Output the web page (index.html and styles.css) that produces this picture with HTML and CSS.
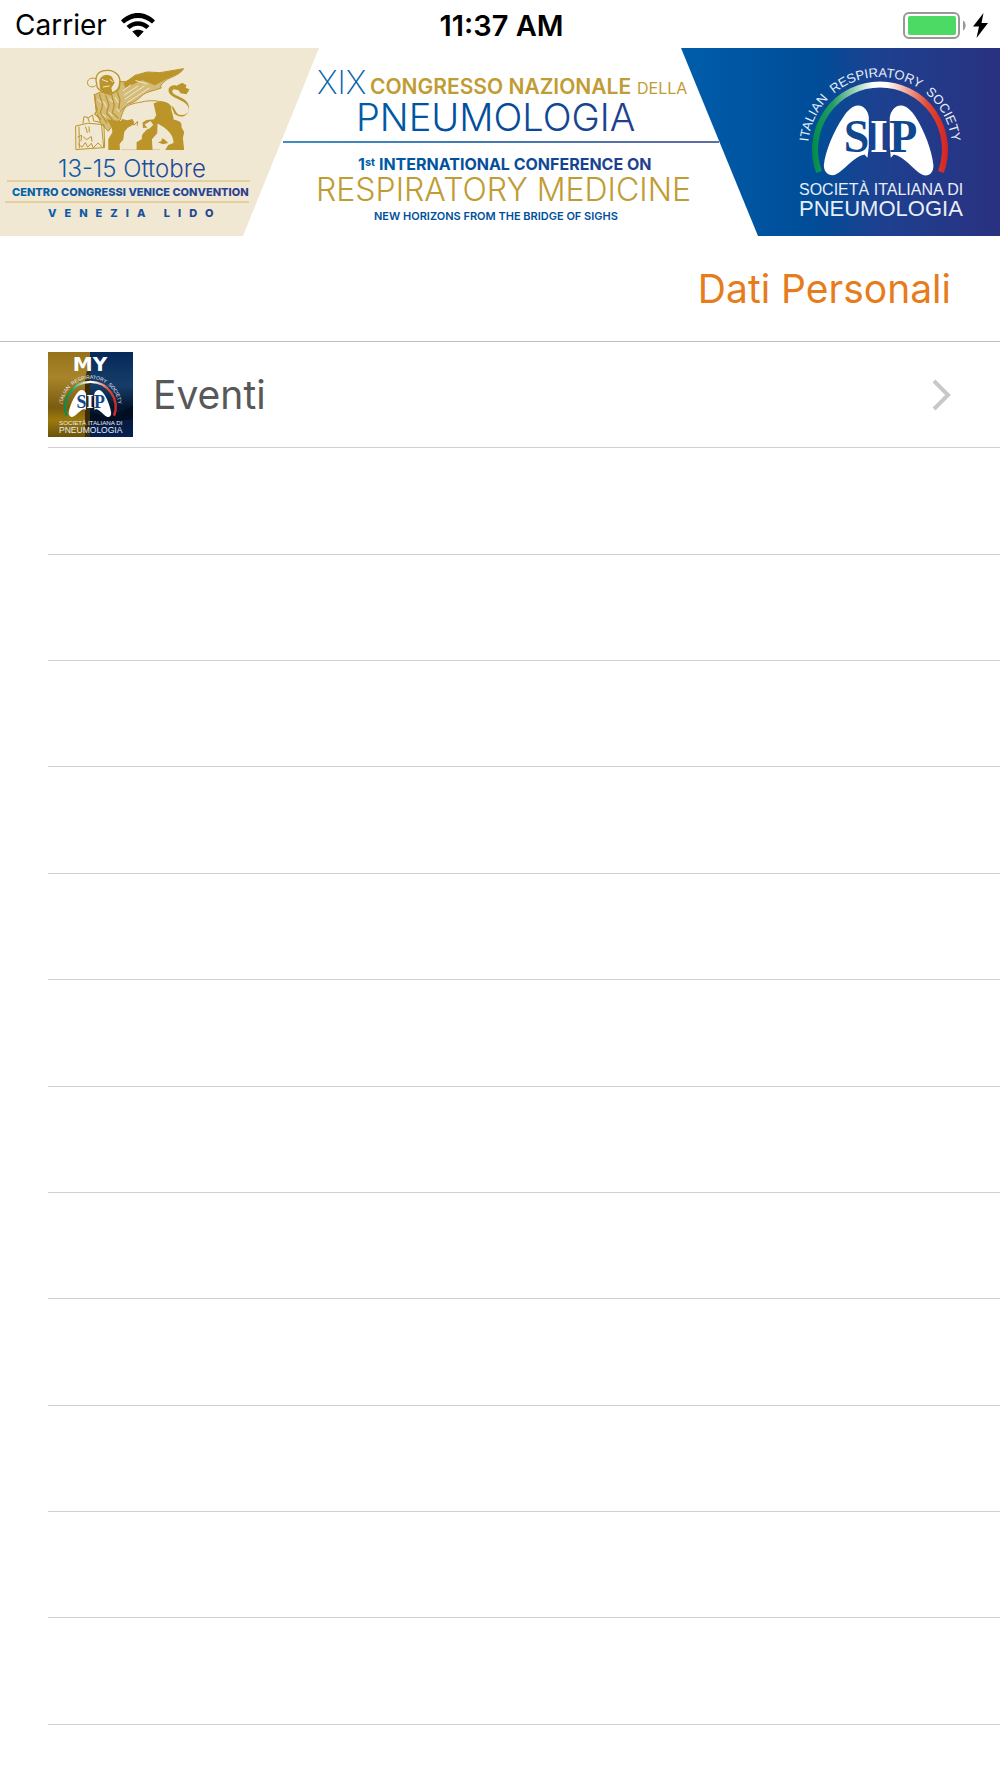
FILE: index.html
```
<!DOCTYPE html>
<html lang="it">
<head>
    <meta charset="UTF-8">
    <meta name="viewport" content="width=device-width, initial-scale=1.0">
    <title>MY SIP - Eventi</title>
    <link rel="stylesheet" href="styles.css">
</head>
<body>
    <div class="status-bar">
        <div class="status-left">
            <span>Carrier</span>
            <svg class="wifi" viewBox="0 0 34 25" width="34" height="25" aria-label="Wi-Fi">
                <path d="M0 7.500C9.500-2.500 24.500-2.500 34 7.500L31 10.600C23 3 11 3 3 10.600Z"/>
                <path d="M5.500 13C12 6.700 22 6.700 28.500 13L25.400 16C20.500 11.500 13.500 11.500 8.600 16Z"/>
                <path d="M11.300 18.600C14.500 16 19.500 16 22.700 18.600L17 24.500Z"/>
            </svg>
        </div>
        <div class="status-time">11:37 AM</div>
        <div class="status-right">
            <svg class="battery" viewBox="0 0 64 27" width="64" height="27" aria-label="Batteria">
                <rect x="1" y="1" width="55" height="25" rx="5" fill="none" stroke="#989898" stroke-width="2"/>
                <rect x="5" y="4" width="48" height="19" rx="2" fill="#4cd964"/>
                <path d="M60 8.500C63.500 10 63.500 17 60 18.500Z" fill="#989898"/>
            </svg>
            <svg class="bolt" viewBox="0 0 15 25" width="15" height="25">
                <path d="M10.500 0L0 13.500H6L3.500 25L15 10H8.500Z"/>
            </svg>
        </div>
    </div>

    <svg class="banner" viewBox="0 48 1000 188" role="img" aria-label="XIX Congresso Nazionale della Pneumologia">
        <defs>
            <linearGradient id="blue" gradientUnits="userSpaceOnUse" x1="690" y1="0" x2="1000" y2="0">
                <stop offset="0" stop-color="#005ca9"/>
                <stop offset="0.4" stop-color="#004d98"/>
                <stop offset="0.6" stop-color="#1c4190"/>
                <stop offset="1" stop-color="#2a3180"/>
            </linearGradient>
            <linearGradient id="dateBlue" gradientUnits="userSpaceOnUse" x1="12" y1="0" x2="255" y2="0">
                <stop offset="0" stop-color="#0064ad"/>
                <stop offset="1" stop-color="#2f3c89"/>
            </linearGradient>
            <linearGradient id="titleBlue" gradientUnits="userSpaceOnUse" x1="283" y1="0" x2="719" y2="0">
                <stop offset="0" stop-color="#0067b0"/>
                <stop offset="0.4" stop-color="#004f9c"/>
                <stop offset="1" stop-color="#2d3986"/>
            </linearGradient>
            <linearGradient id="flag" gradientUnits="userSpaceOnUse" x1="812" y1="0" x2="948" y2="0">
                <stop offset="0" stop-color="#008c4a"/>
                <stop offset="0.15" stop-color="#239b66"/>
                <stop offset="0.45" stop-color="#fff"/>
                <stop offset="0.55" stop-color="#fff"/>
                <stop offset="0.85" stop-color="#e04a35"/>
                <stop offset="1" stop-color="#d52222"/>
            </linearGradient>
            <path id="arc" d="M808 149A72 72 0 0 1 952 149V170"/>
            <g id="sip">
                <path d="M819 172A65 65 0 1 1 941 172" fill="none" stroke="url(#flag)" stroke-width="6"/>
                <text class="arc-text"><textPath href="#arc" startOffset="113" text-anchor="middle">ITALIAN &#160;RESPIRATORY &#160;SOCIETY</textPath></text>
                <g transform="translate(670 0) scale(0.333)">
                    <path fill="#fff" d="M565 317C584 318 595 334 597 352V440L593 474L584 464C550 470 525 512 496 525C478 530 462 518 462 496C466 455 492 392 520 352C533 332 549 316 565 317Z"/>
                    <path fill="#fff" d="M693 317C674 318 663 334 660 352V440L663 474L672 464C706 470 731 512 758 525C776 532 792 519 791 496C787 455 764 392 738 352C725 332 709 316 693 317Z"/>
                    <text class="sip-text" x="522" y="455">S<tspan class="sip-i" dx="2">I</tspan><tspan dx="4">P</tspan></text>
                </g>
                <text class="society" x="799" y="195">SOCIETÀ ITALIANA DI</text>
                <text class="society-name" x="799" y="216">PNEUMOLOGIA</text>
            </g>
        </defs>

        <rect x="0" y="48" width="1000" height="188" fill="#fff"/>
        <path d="M0 48H319L243 236H0Z" fill="#f1e8d4"/>
        <path d="M681 48H1000V236H758Z" fill="url(#blue)"/>

        <!-- lion of Venice -->
        <g transform="translate(60 60) scale(0.333)" fill="#bb952a" stroke="#bb952a" stroke-linejoin="round" stroke-linecap="round">
            <path d="M180 64L200 66L225 46L262 36L300 38L371 26C362 42 340 49 322 58C310 68 298 76 304 84C282 93 262 94 250 104C236 116 227 126 206 132C194 141 186 160 181 180L158 196L145 214L122 190L108 150L104 104L122 96L152 100L176 90Z" fill-opacity="0.55" stroke-width="3"/>
            <path d="M190 68L225 47L263 37L300 39L371 26C360 43 338 47 316 59L285 76L248 61L222 72L196 84Z" stroke="none"/>
            <path d="M108 60C108 38 125 30 144 31C168 32 182 48 180 70C180 88 164 98 150 104C136 98 120 96 112 82Z" fill="none" stroke-width="4"/>
            <path d="M118 62C122 45 143 40 156 50L164 68L154 84L158 98L134 101L120 86Z" stroke="none"/>
            <path d="M108 56C91 50 80 60 83 72C88 84 104 82 108 76" fill="none" stroke-width="3"/>
            <path d="M103 104C109 122 103 134 112 150L105 162L122 178M119 104L128 137L121 158L140 188M137 107L147 134L140 160L158 180M155 103L163 137L157 158L175 174M172 96L180 119L177 145" fill="none" stroke-width="4"/>
            <path d="M114 119L124 128M131 125L139 141M149 118L158 125M166 112L174 127M128 164L137 170M149 157L157 168M171 147L178 155M190 92L212 75M193 105L233 79M196 117L253 78M202 128L268 84M228 62L262 72M127 59L143 65M151 59L158 65M130 81L148 78" fill="none" stroke="#f1e8d4" stroke-width="3"/>
            <path d="M182 154C193 137 219 130 246 126C267 120 302 121 325 132" fill="none" stroke-width="3"/>
            <path d="M281 131C300 119 325 125 334 139C332 151 341 165 341 179C357 184 367 184 365 203L373 216L369 234L373 270H316L325 255L341 249C340 229 331 217 313 203L293 191L292 220L276 238L278 270H230V247L246 237C243 221 259 213 267 203L249 204L248 188L260 180L282 178L289 166Z" stroke="none"/>
            <path d="M254 194L272 183L280 195L266 208Z" fill="#f1e8d4" stroke="none"/>
            <path d="M139 178C150 192 158 203 157 218L145 238L145 270H180L179 252L190 239L193 216L204 203L184 184Z" stroke="none"/>
            <path d="M176 191L187 177L202 181L218 177L222 193L205 203L184 202Z" stroke="none"/>
            <path d="M213 190L221 184L222 196L233 184L232 196" fill="none" stroke-width="3"/>
            <path d="M334 138C349 143 344 165 364 165C384 167 392 149 382 136C372 121 342 115 330 102C318 84 335 71 350 77L367 68L380 76L377 83L389 88L380 103L362 100L356 91L342 88C332 94 338 102 354 108C378 119 392 130 386 153C376 179 350 169 343 161Z" stroke="none"/>
            <path d="M48 198L83 190L132 194L134 263L90 266L49 269ZM69 190L72 170L86 173L98 165L101 183L121 187M83 172L88 186M57 201L58 264M77 201L82 218M87 201L88 216M54 231L65 226L63 243M70 231L80 239L94 230L96 244M55 252L66 262L76 248L83 262L94 250L100 264L114 249L126 260M125 196L131 262" fill="none" stroke-width="3"/>
            <path d="M294 247L305 243L306 235L314 239L325 249L309 253Z" stroke="none"/>
            <path d="M184 269H300" fill="none" stroke-width="1"/>
        </g>

        <text class="date" x="58" y="177">13-15 Ottobre</text>
        <path d="M7 181H250M5 202H249" stroke="#e3d0a0" stroke-width="2"/>
        <text class="venue" x="12" y="196">CENTRO CONGRESSI VENICE CONVENTION</text>
        <text class="city" x="48" y="217">VENEZIA LIDO</text>

        <text class="xix" x="317" y="94">XIX</text>
        <text class="congress" x="370" y="94">CONGRESSO NAZIONALE</text>
        <text class="della" x="637" y="94">DELLA</text>
        <text class="title" x="356" y="131">PNEUMOLOGIA</text>
        <path d="M283 141H719V143H283Z" fill="url(#titleBlue)" opacity="0.75"/>
        <text class="conference" x="358" y="170">1<tspan class="sup" dy="-4">st</tspan><tspan dy="4"> INTERNATIONAL CONFERENCE ON</tspan></text>
        <text class="medicine" x="316" y="201">RESPIRATORY MEDICINE</text>
        <text class="tagline" x="374" y="220">NEW HORIZONS FROM THE BRIDGE OF SIGHS</text>

        <use href="#sip"/>
    </svg>

    <div class="toolbar">
        <a href="#dati">Dati Personali</a>
    </div>

    <ul class="list">
        <li>
            <a class="event" href="#eventi">
                <svg class="thumb" viewBox="0 0 85 85" width="85" height="85" aria-hidden="true">
                    <defs>
                        <linearGradient id="gold" x1="0" y1="0" x2="0" y2="1">
                            <stop offset="0" stop-color="#96731a"/>
                            <stop offset="0.3" stop-color="#a8852a"/>
                            <stop offset="0.65" stop-color="#7a5b10"/>
                            <stop offset="0.8" stop-color="#9d7a0c"/>
                            <stop offset="1" stop-color="#6b5108"/>
                        </linearGradient>
                        <linearGradient id="night" x1="0" y1="0" x2="0" y2="1">
                            <stop offset="0" stop-color="#052a5a"/>
                            <stop offset="0.4" stop-color="#163d68"/>
                            <stop offset="0.65" stop-color="#04162f"/>
                            <stop offset="1" stop-color="#082052"/>
                        </linearGradient>
                    </defs>
                    <rect width="42" height="85" fill="url(#gold)"/>
                    <rect x="42" width="43" height="85" fill="url(#night)"/>
                    <path d="M37 85V28L40 13L42 8V85Z" fill="#3b2c0c"/>
                    <path d="M42 60L60 65L85 54V67L42 72Z" fill="#020e22"/>
                    <text class="my" x="42" y="19" text-anchor="middle">MY</text>
                    <use href="#sip" transform="translate(-299 -3) scale(0.388)"/>
                </svg>
                <span>Eventi</span>
                <svg class="chevron" viewBox="0 0 20 32" width="20" height="32" aria-hidden="true">
                    <path d="M2 2L16 16L2 30" fill="none" stroke="#c7c7cc" stroke-width="4"/>
                </svg>
            </a>
        </li>
        <li></li>
        <li></li>
        <li></li>
        <li></li>
        <li></li>
        <li></li>
        <li></li>
        <li></li>
        <li></li>
        <li></li>
        <li></li>
        <li></li>
        <li></li>
    </ul>
</body>
</html>
```
FILE: styles.css
```
body {
    font-family: Inter, "Liberation Sans", sans-serif;
    margin: 0;
    min-height: 100vh;
    background: #fff;
    color: #000;
    display: flex;
    flex-direction: column;
}
a {
    text-decoration: none;
}
.status-bar {
    box-sizing: border-box;
    display: grid;
    grid-template-columns: 1fr auto 1fr;
    align-items: center;
    height: 48px;
    padding: 2px 12px 0 15px;
    font-size: 28px;
}
.status-left, .status-right {
    display: flex;
    align-items: center;
}
.status-left {
    gap: 14px;
}
.status-right {
    justify-content: flex-end;
    gap: 6px;
}
.status-time {
    font-size: 29px;
    font-weight: 600;
}
.banner {
    display: block;
    width: 100%;
}
.date {
    font-size: 24px;
    font-weight: 300;
    fill: url(#dateBlue);
}
.venue, .city {
    font-size: 11px;
    font-weight: 800;
    fill: url(#dateBlue);
}
.city {
    letter-spacing: 8px;
}
.xix {
    font-size: 32px;
    font-weight: 200;
    fill: url(#titleBlue);
}
.congress {
    font-size: 21px;
    font-weight: 600;
    fill: #c09c34;
}
.della {
    font-size: 16px;
    fill: #c09c34;
}
.title {
    font-size: 38px;
    font-weight: 300;
    fill: url(#titleBlue);
}
.conference {
    font-size: 16px;
    font-weight: 700;
    fill: url(#titleBlue);
}
.sup {
    font-size: 11px;
}
.medicine {
    font-size: 32px;
    font-weight: 300;
    fill: #c09c34;
}
.tagline {
    font-size: 11px;
    font-weight: 600;
    fill: #004f9c;
}
.arc-text, .society, .society-name {
    font-family: "Liberation Sans", Arial, sans-serif;
    fill: #e8eef8;
}
.arc-text {
    font-size: 13px;
}
.society {
    font-size: 16px;
}
.society-name {
    font-size: 22px;
}
.sip-text {
    font-family: "Liberation Serif", "Times New Roman", serif;
    font-size: 138px;
    font-weight: 700;
    fill: #10488f;
}
.sip-i {
    fill: #fff;
}
.my {
    font-family: "DejaVu Sans", sans-serif;
    font-size: 20px;
    font-weight: 700;
    fill: #fff;
}
.toolbar {
    box-sizing: border-box;
    display: flex;
    align-items: center;
    justify-content: flex-end;
    height: 106px;
    padding-right: 49px;
    border-bottom: 1px solid #bcbbc1;
}
.toolbar a {
    color: #e67c1b;
    font-size: 39px;
}
.list {
    flex: 1;
    display: grid;
    grid-template-rows: repeat(13, 2fr) 1fr;
    list-style: none;
    margin: 0;
    padding: 0 0 0 48px;
}
.list li {
    border-bottom: 1px solid #d0d0d2;
}
.list li:last-child {
    border-bottom: none;
}
.event {
    display: flex;
    align-items: center;
    height: 100%;
    padding-right: 48px;
    color: #58585a;
    font-size: 39px;
}
.event span {
    flex: 1;
    padding-left: 20px;
}
```
